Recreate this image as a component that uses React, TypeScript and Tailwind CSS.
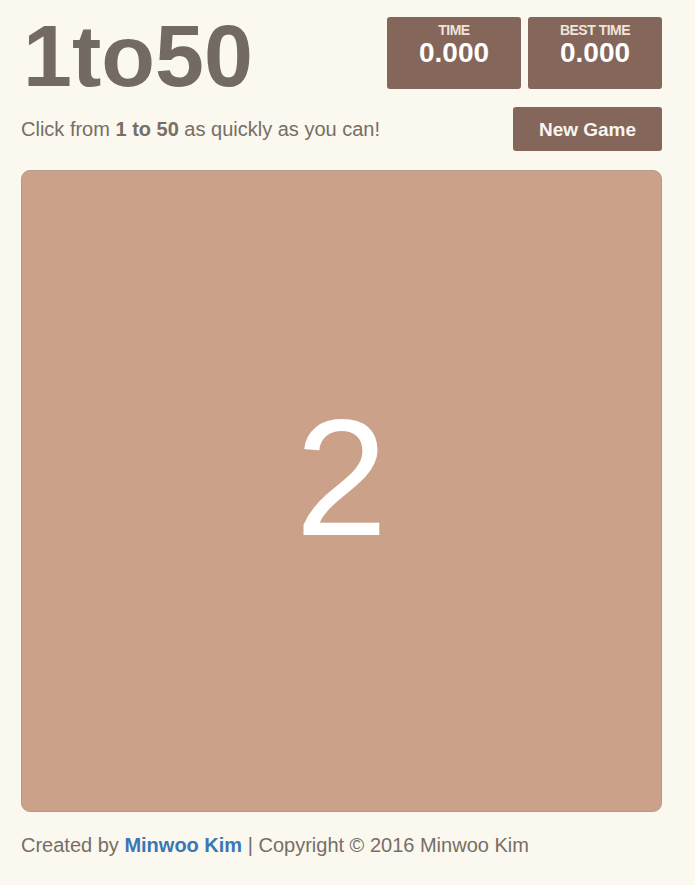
export default function App() {
  return (
    <div className="min-h-[885px] bg-[#faf8ef] font-['Liberation_Sans',Arial,sans-serif] text-[#776e65]">
      <div className="ml-[21px] w-[641px] pt-[12px]">
        <div className="flex items-start justify-between">
          <h1 className="text-[88px] font-bold leading-[88px] text-[#736a62] ml-[2px]">1to50</h1>
          <div className="mt-[5px] flex gap-[7px]">
            <ScoreBox label="TIME" value="0.000" />
            <ScoreBox label="BEST TIME" value="0.000" />
          </div>
        </div>
        <div className="mt-[7px] flex items-center justify-between">
          <p className="text-[20px] text-[#776e65]">
            Click from <b>1 to 50</b> as quickly as you can!
          </p>
          <button className="h-[44px] w-[149px] rounded-[3px] bg-[#85665a] pt-[2px] text-[19px] font-bold text-[#f9f6f2]">
            New Game
          </button>
        </div>
        <div className="mt-[19px] flex h-[642px] items-center justify-center rounded-[9px] border border-[#b39a8e] bg-[#cca18a] pb-[26px]">
          <span className="text-[166px] leading-none text-white">2</span>
        </div>
        <p className="mt-[18px] text-[20px] text-[#776e65]">
          Created by <a className="font-bold text-[#3a77b5]">Minwoo Kim</a> | Copyright © 2016 Minwoo Kim
        </p>
      </div>
    </div>
  );
}

function ScoreBox({ label, value }: { label: string; value: string }) {
  return (
    <div className="flex h-[72px] w-[134px] flex-col items-center rounded-[3px] bg-[#85665a] pt-[6px]">
      <span className="text-[14px] font-bold leading-[14px] tracking-[-0.5px] text-[#eee4da]">{label}</span>
      <span className="mt-[2px] text-[28px] font-bold leading-[28px] text-white">{value}</span>
    </div>
  );
}
